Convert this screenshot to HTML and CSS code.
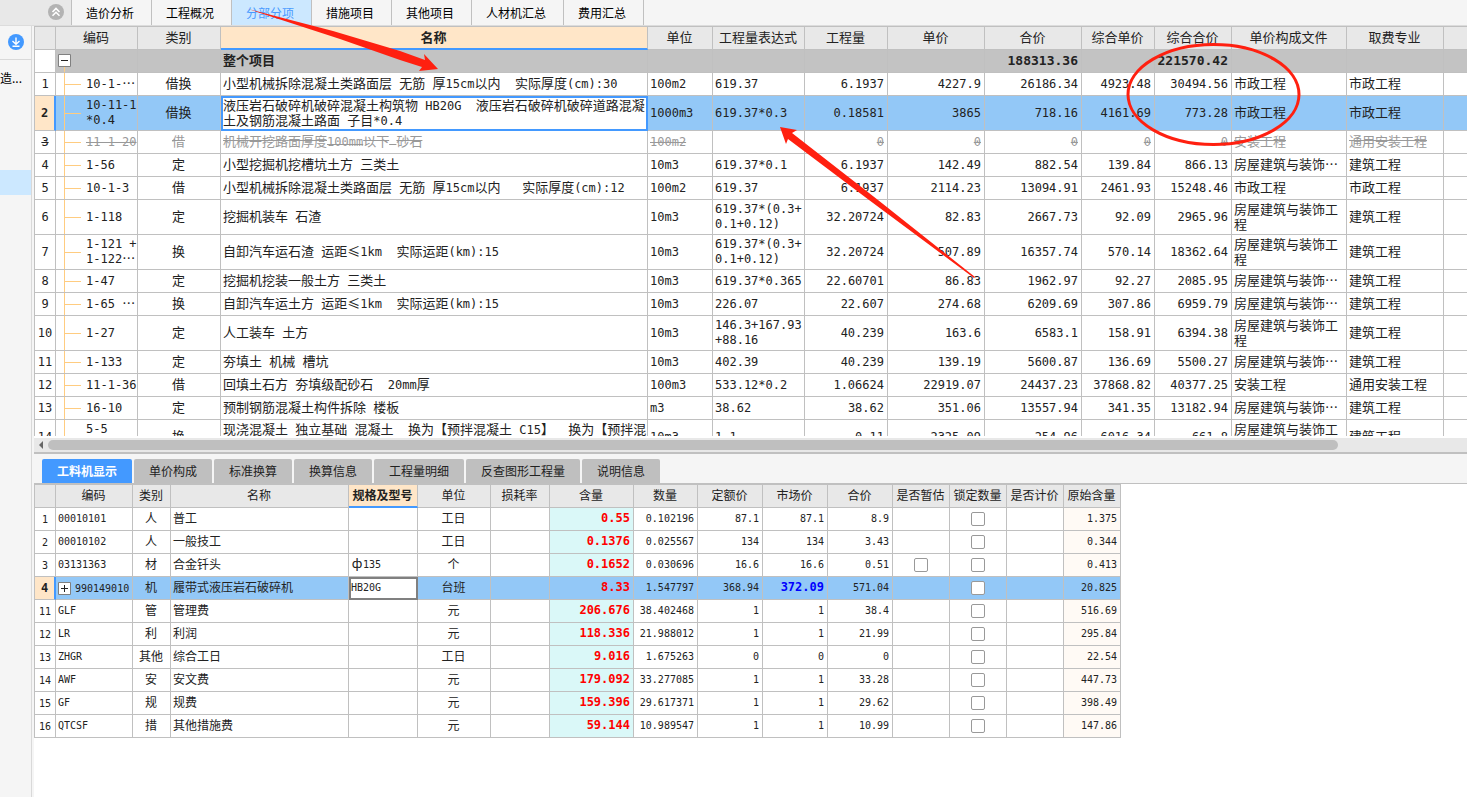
FILE: index.html
```html
<!DOCTYPE html>
<html lang="zh-CN">
<head>
<meta charset="utf-8">
<title>分部分项</title>
<link rel="stylesheet" href="styles.css">
</head>
<body>
<header class="topbar">
  <div class="collapse">
    <button class="icon-btn" aria-label="收起">
      <svg width="16" height="16" viewBox="0 0 16 16"><circle cx="8" cy="8" r="8" fill="#b3b3b3"/><path d="M4.500 8 8 4.500 11.500 8M4.500 11.800 8 8.300l3.500 3.500" fill="none" stroke="#fff" stroke-width="1.600"/></svg>
    </button>
  </div>
  <nav class="tabs">
    <button>造价分析</button><button>工程概况</button><button class="on">分部分项</button><button>措施项目</button><button>其他项目</button><button>人材机汇总</button><button>费用汇总</button>
  </nav>
</header>
<div class="body">
  <aside class="side">
    <div class="side-head">
      <button class="icon-btn" aria-label="下载">
        <svg width="16" height="16" viewBox="0 0 16 16"><circle cx="8" cy="8" r="8" fill="#4399ff"/><path d="M8 3.500v6.500M4.500 7 8 10.300 11.500 7M4.500 12.300h7" fill="none" stroke="#fff" stroke-width="1.400"/></svg>
      </button>
    </div>
    <div class="side-item">造...</div>
    <div class="side-sel"></div>
  </aside>
  <main class="main">
    <div class="pane">
      <table class="grid upper">
        <colgroup><col class="w22"><col class="w82"><col class="w83"><col class="w427"><col class="w65"><col class="w92"><col class="w83"><col class="w97"><col class="w97"><col class="w73"><col class="w77"><col class="w115"><col class="w97"><col></colgroup>
        <thead><tr><th></th><th>编码</th><th>类别</th><th class="cur">名称</th><th>单位</th><th>工程量表达式</th><th>工程量</th><th>单价</th><th>合价</th><th>综合单价</th><th>综合合价</th><th>单价构成文件</th><th>取费专业</th><th></th></tr></thead>
        <tbody>
        <tr class="sum"><td class="no"></td><td class="root"><button class="tog" aria-label="折叠"><svg width="13" height="13" viewBox="0 0 13 13"><path d="M.5.5h12v12H.5z" fill="#fff" stroke="#808080"/><path d="M3 6.500h7" stroke="#222"/></svg></button></td><td></td><td>整个项目</td><td></td><td></td><td></td><td></td><td class="r">188313.36</td><td></td><td class="r">221570.42</td><td></td><td></td><td></td></tr>
        <tr><td class="no">1</td><td class="code">10-1-<em>…</em></td><td class="c">借换</td><td>小型机械拆除混凝土类路面层<span> </span>无筋<span> </span>厚<span>15cm</span>以内<span>  </span>实际厚度<span>(cm):30</span></td><td class="n">100m2</td><td class="n">619.37</td><td class="r">6.1937</td><td class="r">4227.9</td><td class="r">26186.34</td><td class="r">4923.48</td><td class="r">30494.56</td><td>市政工程</td><td>市政工程</td><td></td></tr>
        <tr class="tall sel"><td class="no">2</td><td class="code">10-11-1<br>*0.4</td><td class="c">借换</td><td class="edit">液压岩石破碎机破碎混凝土构筑物<span> HB20G  </span>液压岩石破碎机破碎道路混凝<br>土及钢筋混凝土路面<span> </span>子目<span>*0.4</span></td><td class="n">1000m3</td><td class="n">619.37*0.3</td><td class="r">0.18581</td><td class="r">3865</td><td class="r">718.16</td><td class="r">4161.69</td><td class="r">773.28</td><td>市政工程</td><td>市政工程</td><td></td></tr>
        <tr class="del"><td class="no">3</td><td class="code">11-1-20</td><td class="c">借</td><td>机械开挖路面厚度<span>100mm</span>以下<span> </span>砂石</td><td class="n">100m2</td><td class="n"></td><td class="r">0</td><td class="r">0</td><td class="r">0</td><td class="r">0</td><td class="r">0</td><td>安装工程</td><td>通用安装工程</td><td></td></tr>
        <tr><td class="no">4</td><td class="code">1-56</td><td class="c">定</td><td>小型挖掘机挖槽坑土方<span> </span>三类土</td><td class="n">10m3</td><td class="n">619.37*0.1</td><td class="r">6.1937</td><td class="r">142.49</td><td class="r">882.54</td><td class="r">139.84</td><td class="r">866.13</td><td>房屋建筑与装饰…</td><td>建筑工程</td><td></td></tr>
        <tr><td class="no">5</td><td class="code">10-1-3</td><td class="c">借</td><td>小型机械拆除混凝土类路面层<span> </span>无筋<span> </span>厚<span>15cm</span>以内<span>   </span>实际厚度<span>(cm):12</span></td><td class="n">100m2</td><td class="n">619.37</td><td class="r">6.1937</td><td class="r">2114.23</td><td class="r">13094.91</td><td class="r">2461.93</td><td class="r">15248.46</td><td>市政工程</td><td>市政工程</td><td></td></tr>
        <tr class="tall"><td class="no">6</td><td class="code">1-118</td><td class="c">定</td><td>挖掘机装车<span> </span>石渣</td><td class="n">10m3</td><td class="n">619.37*(0.3+<br>0.1+0.12)</td><td class="r">32.20724</td><td class="r">82.83</td><td class="r">2667.73</td><td class="r">92.09</td><td class="r">2965.96</td><td>房屋建筑与装饰工<br>程</td><td>建筑工程</td><td></td></tr>
        <tr class="tall"><td class="no">7</td><td class="code">1-121 +<br>1-122<em>…</em></td><td class="c">换</td><td>自卸汽车运石渣<span> </span>运距≤<span>1km  </span>实际运距<span>(km):15</span></td><td class="n">10m3</td><td class="n">619.37*(0.3+<br>0.1+0.12)</td><td class="r">32.20724</td><td class="r">507.89</td><td class="r">16357.74</td><td class="r">570.14</td><td class="r">18362.64</td><td>房屋建筑与装饰工<br>程</td><td>建筑工程</td><td></td></tr>
        <tr><td class="no">8</td><td class="code">1-47</td><td class="c">定</td><td>挖掘机挖装一般土方<span> </span>三类土</td><td class="n">10m3</td><td class="n">619.37*0.365</td><td class="r">22.60701</td><td class="r">86.83</td><td class="r">1962.97</td><td class="r">92.27</td><td class="r">2085.95</td><td>房屋建筑与装饰…</td><td>建筑工程</td><td></td></tr>
        <tr><td class="no">9</td><td class="code">1-65 <em>…</em></td><td class="c">换</td><td>自卸汽车运土方<span> </span>运距≤<span>1km  </span>实际运距<span>(km):15</span></td><td class="n">10m3</td><td class="n">226.07</td><td class="r">22.607</td><td class="r">274.68</td><td class="r">6209.69</td><td class="r">307.86</td><td class="r">6959.79</td><td>房屋建筑与装饰…</td><td>建筑工程</td><td></td></tr>
        <tr class="tall"><td class="no">10</td><td class="code">1-27</td><td class="c">定</td><td>人工装车<span> </span>土方</td><td class="n">10m3</td><td class="n">146.3+167.93<br>+88.16</td><td class="r">40.239</td><td class="r">163.6</td><td class="r">6583.1</td><td class="r">158.91</td><td class="r">6394.38</td><td>房屋建筑与装饰工<br>程</td><td>建筑工程</td><td></td></tr>
        <tr><td class="no">11</td><td class="code">1-133</td><td class="c">定</td><td>夯填土<span> </span>机械<span> </span>槽坑</td><td class="n">10m3</td><td class="n">402.39</td><td class="r">40.239</td><td class="r">139.19</td><td class="r">5600.87</td><td class="r">136.69</td><td class="r">5500.27</td><td>房屋建筑与装饰…</td><td>建筑工程</td><td></td></tr>
        <tr><td class="no">12</td><td class="code">11-1-36</td><td class="c">借</td><td>回填土石方<span> </span>夯填级配砂石<span>  20mm</span>厚</td><td class="n">100m3</td><td class="n">533.12*0.2</td><td class="r">1.06624</td><td class="r">22919.07</td><td class="r">24437.23</td><td class="r">37868.82</td><td class="r">40377.25</td><td>安装工程</td><td>通用安装工程</td><td></td></tr>
        <tr><td class="no">13</td><td class="code">16-10</td><td class="c">定</td><td>预制钢筋混凝土构件拆除<span> </span>楼板</td><td class="n">m3</td><td class="n">38.62</td><td class="r">38.62</td><td class="r">351.06</td><td class="r">13557.94</td><td class="r">341.35</td><td class="r">13182.94</td><td>房屋建筑与装饰…</td><td>建筑工程</td><td></td></tr>
        <tr class="tall"><td class="no">14</td><td class="code last">5-5<br>&nbsp;</td><td class="c">换</td><td>现浇混凝土<span> </span>独立基础<span> </span>混凝土<span>  </span>换为【预拌混凝土<span> C15</span>】<span>  </span>换为【预拌混<br>&nbsp;</td><td class="n">10m3</td><td class="n">1.1</td><td class="r">0.11</td><td class="r">2325.09</td><td class="r">254.96</td><td class="r">6016.34</td><td class="r">661.8</td><td>房屋建筑与装饰工<br>程</td><td>建筑工程</td><td></td></tr>
        </tbody>
      </table>
    </div>
    <div class="hscroll">
      <svg width="14" height="14" viewBox="0 0 14 14"><path d="M9 3v8L5 7z" fill="#666"/></svg>
      <div class="thumb"></div>
    </div>
    <nav class="subtabs">
      <button class="on">工料机显示</button><button>单价构成</button><button>标准换算</button><button>换算信息</button><button>工程量明细</button><button>反查图形工程量</button><button>说明信息</button>
    </nav>
    <table class="grid lower">
      <colgroup><col class="w22"><col class="w77"><col class="w38"><col class="w178"><col class="w69"><col class="w73"><col class="w59"><col class="w84"><col class="w64"><col class="w65"><col class="w65"><col class="w65"><col class="w57"><col class="w57"><col class="w57"><col class="w57"></colgroup>
      <thead><tr><th></th><th>编码</th><th>类别</th><th>名称</th><th class="cur">规格及型号</th><th>单位</th><th>损耗率</th><th>含量</th><th>数量</th><th>定额价</th><th>市场价</th><th>合价</th><th>是否暂估</th><th>锁定数量</th><th>是否计价</th><th>原始含量</th></tr></thead>
      <tbody>
      <tr><td class="no">1</td><td class="n">00010101</td><td class="c">人</td><td>普工</td><td></td><td class="c">工日</td><td></td><td class="amt">0.55</td><td class="r">0.102196</td><td class="r">87.1</td><td class="r">87.1</td><td class="r">8.9</td><td></td><td class="box"><input type="checkbox" aria-label="锁定数量"></td><td></td><td class="r orig">1.375</td></tr>
      <tr><td class="no">2</td><td class="n">00010102</td><td class="c">人</td><td>一般技工</td><td></td><td class="c">工日</td><td></td><td class="amt">0.1376</td><td class="r">0.025567</td><td class="r">134</td><td class="r">134</td><td class="r">3.43</td><td></td><td class="box"><input type="checkbox" aria-label="锁定数量"></td><td></td><td class="r orig">0.344</td></tr>
      <tr><td class="no">3</td><td class="n">03131363</td><td class="c">材</td><td>合金钎头</td><td class="n"><em>ф</em>135</td><td class="c">个</td><td></td><td class="amt">0.1652</td><td class="r">0.030696</td><td class="r">16.6</td><td class="r">16.6</td><td class="r">0.51</td><td class="box"><input type="checkbox" aria-label="是否暂估"></td><td class="box"><input type="checkbox" aria-label="锁定数量"></td><td></td><td class="r orig">0.413</td></tr>
      <tr class="sel"><td class="no">4</td><td class="n box"><div class="parent"><button class="tog" aria-label="展开"><svg width="13" height="13" viewBox="0 0 13 13"><path d="M.5.5h12v12H.5z" fill="#fff" stroke="#808080"/><path d="M3 6.500h7M6.500 3v7" stroke="#222"/></svg></button>990149010</div></td><td class="c">机</td><td>履带式液压岩石破碎机</td><td class="n edit">HB20G</td><td class="c">台班</td><td></td><td class="amt">8.33</td><td class="r">1.547797</td><td class="r">368.94</td><td class="r mkt">372.09</td><td class="r">571.04</td><td></td><td class="box"><input type="checkbox" aria-label="锁定数量"></td><td></td><td class="r orig">20.825</td></tr>
      <tr><td class="no">11</td><td class="n">GLF</td><td class="c">管</td><td>管理费</td><td></td><td class="c">元</td><td></td><td class="amt">206.676</td><td class="r">38.402468</td><td class="r">1</td><td class="r">1</td><td class="r">38.4</td><td></td><td class="box"><input type="checkbox" aria-label="锁定数量"></td><td></td><td class="r orig">516.69</td></tr>
      <tr><td class="no">12</td><td class="n">LR</td><td class="c">利</td><td>利润</td><td></td><td class="c">元</td><td></td><td class="amt">118.336</td><td class="r">21.988012</td><td class="r">1</td><td class="r">1</td><td class="r">21.99</td><td></td><td class="box"><input type="checkbox" aria-label="锁定数量"></td><td></td><td class="r orig">295.84</td></tr>
      <tr><td class="no">13</td><td class="n">ZHGR</td><td class="c">其他</td><td>综合工日</td><td></td><td class="c">工日</td><td></td><td class="amt">9.016</td><td class="r">1.675263</td><td class="r">0</td><td class="r">0</td><td class="r">0</td><td></td><td class="box"><input type="checkbox" aria-label="锁定数量"></td><td></td><td class="r orig">22.54</td></tr>
      <tr><td class="no">14</td><td class="n">AWF</td><td class="c">安</td><td>安文费</td><td></td><td class="c">元</td><td></td><td class="amt">179.092</td><td class="r">33.277085</td><td class="r">1</td><td class="r">1</td><td class="r">33.28</td><td></td><td class="box"><input type="checkbox" aria-label="锁定数量"></td><td></td><td class="r orig">447.73</td></tr>
      <tr><td class="no">15</td><td class="n">GF</td><td class="c">规</td><td>规费</td><td></td><td class="c">元</td><td></td><td class="amt">159.396</td><td class="r">29.617371</td><td class="r">1</td><td class="r">1</td><td class="r">29.62</td><td></td><td class="box"><input type="checkbox" aria-label="锁定数量"></td><td></td><td class="r orig">398.49</td></tr>
      <tr><td class="no">16</td><td class="n">QTCSF</td><td class="c">措</td><td>其他措施费</td><td></td><td class="c">元</td><td></td><td class="amt">59.144</td><td class="r">10.989547</td><td class="r">1</td><td class="r">1</td><td class="r">10.99</td><td></td><td class="box"><input type="checkbox" aria-label="锁定数量"></td><td></td><td class="r orig">147.86</td></tr>
      </tbody>
    </table>
  </main>
</div>
<svg class="marks" width="1467" height="300" viewBox="0 0 1467 300" aria-hidden="true">
  <g fill="#ff2010">
    <path d="M248 9 333 31 400 51l25 9-1-6 14 15-19 2 3-4-22-7-60-21z"/>
    <path d="M780 127l17 3-5 3 86 67 97 77-1 1-105-78-81-61-2 5z"/>
  </g>
  <ellipse cx="1213.500" cy="94.500" rx="85.500" ry="50" fill="none" stroke="#ff2010" stroke-width="3"/>
</svg>
</body>
</html>
```
FILE: styles.css
```css
* { box-sizing: border-box; }

body {
  margin: 0;
  min-height: 100vh;
  display: flex;
  flex-direction: column;
  position: relative;
  overflow-x: hidden;
  background: #f5f5f5;
  color: #222;
  font: 12px/15px "Noto Sans CJK SC", sans-serif;
}

button {
  font: inherit;
  color: inherit;
  border: 0;
  padding: 0;
  margin: 0;
  background: none;
}

svg { display: block; }

.topbar {
  display: flex;
  height: 26px;
  border-bottom: 1px solid #dcdcdc;
}

.collapse {
  width: 72px;
  padding: 4px 0 0 48px;
  background: #e8e8e8;
  border-right: 1px solid #c0c0c0;
}

.tabs { display: flex; }

.tabs button {
  padding: 0 17px 0 14px;
  border-right: 1px solid #c0c0c0;
  color: #000;
}

.tabs .on {
  background: #cce8ff;
  color: #4a9bff;
}

.body { flex: 1; display: flex; }

.side {
  width: 32px;
  flex: none;
  border-right: 1px solid #d9d9d9;
}

.side-head {
  height: 34px;
  padding: 8px 0 0 8px;
  border-bottom: 1px solid #d9d9d9;
}

.side-item {
  height: 110px;
  padding-top: 10px;
  color: #000;
}

.side-sel { height: 25px; background: #cce8ff; }

.main {
  flex: 1;
  min-width: 0;
  margin-left: 2px;
  background: #fff;
}

.pane { height: 412px; overflow: hidden; border-bottom: 2px solid #fff; }

.grid {
  table-layout: fixed;
  border-collapse: separate;
  border-spacing: 0;
  border-top: 1px solid #c0c0c0;
}

.upper { width: 100%; font-size: 13px; }
.lower { width: 1087px; font-size: 12px; }

.grid th, .grid td {
  height: 23px;
  padding: 0 2px 3px;
  border-right: 1px solid #c0c0c0;
  border-bottom: 1px solid #c0c0c0;
  line-height: 15px;
  white-space: pre;
  text-align: left;
  overflow: hidden;
}

.grid th {
  padding: 0 1px 3px 0;
  background: #e8e8e8;
  font-weight: normal;
  text-align: center;
}

.grid th:first-child, .grid td:first-child { border-left: 1px solid #c0c0c0; }
.upper th:last-child, .upper td:last-child { border-right: 0; }

.grid th.cur {
  background: #ffe6c8;
  border-bottom: 2px solid #4399ff;
  font-weight: bold;
}

.grid .tall td { height: 35px; }

.grid .n, .grid .r, .grid .no, .grid .code, .grid .amt, .grid td span {
  font-family: "DejaVu Sans Mono", monospace;
}
.upper .n, .upper .r, .upper .no, .upper .code, .upper td span, .lower .amt { font-size: 12px; }
.lower .n, .lower .r, .lower .no { font-size: 10px; }
.grid td span { line-height: 0; }
.upper .n, .upper .r { padding-bottom: 0; }
.lower .n, .lower .r, .lower .amt { padding-bottom: 2px; }

.grid em {
  font-family: "Noto Sans CJK SC", sans-serif;
  font-style: normal;
  font-size: 13px;
  line-height: 0;
}
.lower em { display: inline-block; width: 12px; text-align: center; }

.grid .r, .grid .amt { text-align: right; padding-right: 3px; }
.grid .c, .grid .no, .grid .box { text-align: center; }
.grid .c { padding: 0 1px 3px 0; }
.grid .no { padding: 0; }
.grid td.box { padding: 0 2px; }

.grid .code {
  padding: 0 0 0 30px;
  background: linear-gradient(#ffcc80, #ffcc80) 8px 0 / 1px 100% no-repeat,
    linear-gradient(#ffcc80, #ffcc80) 8px 50% / 17px 1px no-repeat;
}
.grid .code.last { background-size: 1px 100%, 0 0; }

.grid .sum td { background-color: #c3c3c3; font-weight: bold; }
.grid .sum .r { font-size: 13px; padding-bottom: 1px; }
.grid .sum td.no { background: #fff; }
.grid .sum .root {
  padding-bottom: 1px;
  background: linear-gradient(#ffcc80, #ffcc80) 8px 100% / 1px 6px no-repeat #c3c3c3;
}

.tog { display: block; flex: none; }

.grid .sel td { background-color: #93c8f7; }
.grid .sel td.no {
  background: #ffe6c8;
  border-right: 2px solid #4399ff;
  font-weight: bold;
}
.lower .sel td.no { font-size: 12px; }
.grid .sel td.edit {
  background: #fff;
  outline: 2px solid #4399ff;
  outline-offset: -2px;
}
.lower .sel td.edit { outline-color: #808080; }

.grid .del td { color: #999; text-decoration: line-through; }
.grid .del td.no { color: #222; }

.parent { display: flex; align-items: center; gap: 4px; }

.lower .amt { background: #daf8f8; color: #f00; font-weight: bold; }
.lower .orig { background: #fffaf5; }
.lower .r.mkt { color: #00f; font-size: 12px; font-weight: bold; }

.grid input {
  appearance: none;
  display: block;
  width: 14px;
  height: 14px;
  margin: 0 auto;
  border: 1px solid #999;
  border-radius: 2px;
  background: #fff;
}

.hscroll {
  display: flex;
  height: 16px;
  padding-top: 2px;
  background: #e8e8e8;
  border-bottom: 2px solid #c0c0c0;
}
.hscroll svg { margin-top: -2px; }
.thumb {
  width: 90%;
  height: 10px;
  border-radius: 5px;
  background: #bfbfbf;
}

.subtabs {
  display: flex;
  gap: 2px;
  padding: 5px 8px 0;
  background: #f5f5f5;
  border-bottom: 1px solid #c0c0c0;
}
.subtabs button {
  height: 24px;
  padding: 0 15px 1px;
  background: #bfbfbf;
  border-radius: 2px 2px 0 0;
}
.subtabs .on { background: #4399ff; color: #fff; font-weight: bold; }

.marks {
  position: absolute;
  left: 0;
  top: 0;
  pointer-events: none;
}

.w22 { width: 22px; }
.w38 { width: 38px; }
.w57 { width: 57px; }
.w59 { width: 59px; }
.w64 { width: 64px; }
.w65 { width: 65px; }
.w69 { width: 69px; }
.w73 { width: 73px; }
.w77 { width: 77px; }
.w82 { width: 82px; }
.w83 { width: 83px; }
.w84 { width: 84px; }
.w92 { width: 92px; }
.w97 { width: 97px; }
.w115 { width: 115px; }
.w178 { width: 178px; }
.w427 { width: 427px; }
```
